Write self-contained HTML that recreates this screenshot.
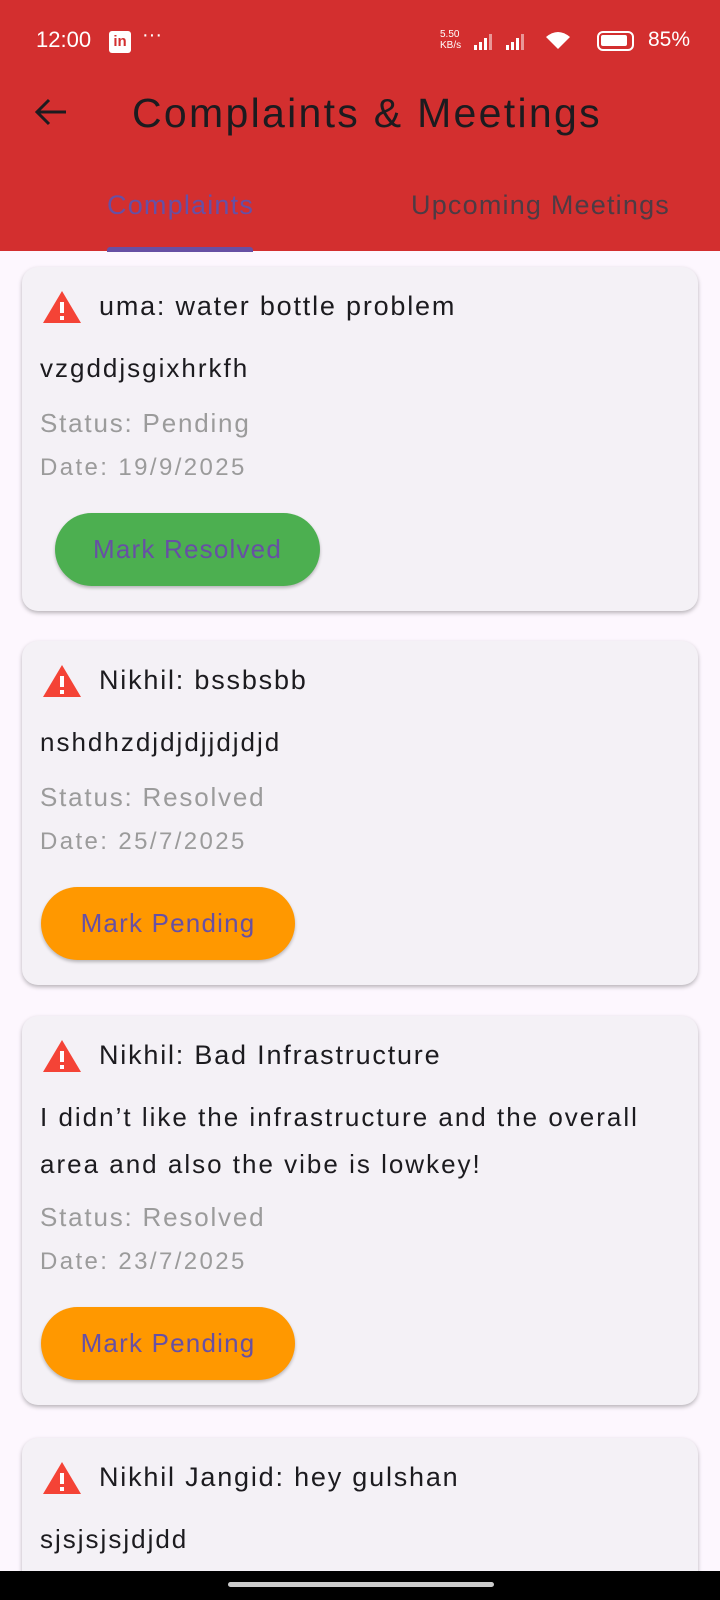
<!DOCTYPE html>
<html style="width:720px;height:1600px;overflow:hidden"><head><meta charset="utf-8"><style>
*{margin:0;padding:0;box-sizing:border-box}
body{width:720px;height:1600px;overflow:hidden;background:#FDF7FE;font-family:"Comic Sans MS","Liberation Sans",sans-serif;position:relative;color:#1c1b1f}
.hdr{position:absolute;left:0;top:0;width:720px;height:251px;background:#D32F2F}
.abs{position:absolute;white-space:nowrap}
.card{position:absolute;left:22px;width:676px;background:#F4F1F6;border-radius:16px;box-shadow:0 2px 4px rgba(0,0,0,.28);overflow:hidden}
.card .ic{position:absolute;left:20px;top:22px}
.card .t{position:absolute;left:77px;top:24px;font-size:27px;letter-spacing:1.8px}
.card .d{position:absolute;left:18px;font-size:26px;line-height:47px;letter-spacing:2px}
.card .s{position:absolute;left:18px;font-size:26px;color:#9b9b9b;letter-spacing:1.8px}
.card .dt{position:absolute;left:18px;font-size:24px;color:#9b9b9b;letter-spacing:2.4px}
.btn{position:absolute;height:73px;border-radius:37px;font-size:26px;letter-spacing:1.2px;color:#6750A4;display:flex;align-items:center;justify-content:center;box-shadow:0 2px 3px rgba(0,0,0,.25)}
</style></head><body>
<div class="hdr"></div>
<div class="abs" style="left:36px;top:27px;font-size:22px;color:#fff">12:00</div>
<div class="abs" style="left:109px;top:31px;width:22px;height:22px;background:#fff;border-radius:3px;color:#D32F2F;font-size:15px;font-weight:bold;text-align:center;line-height:22px">in</div>
<div class="abs" style="left:142px;top:24px;font-size:20px;color:#fff">···</div>
<div class="abs" style="left:440px;top:29px;font-size:10px;line-height:11px;color:#fff">5.50<br>KB/s</div>
<svg class="abs" style="left:472px;top:29px" width="120" height="24" viewBox="0 0 120 24" fill="#fff"><rect x="2" y="16" width="3" height="5"/><rect x="7" y="13" width="3" height="8"/><rect x="12" y="9" width="3" height="12"/><rect x="17" y="5" width="3" height="16" opacity=".5"/><rect x="34" y="16" width="3" height="5"/><rect x="39" y="13" width="3" height="8"/><rect x="44" y="9" width="3" height="12"/><rect x="49" y="5" width="3" height="16" opacity=".5"/><path d="M86 20 L74 8 Q86 -2 98 8 Z"/></svg>
<div class="abs" style="left:597px;top:31px;width:37px;height:20px;border:2.5px solid #fff;border-radius:6px"><div style="margin:2px;width:26px;height:11px;background:#fff;border-radius:2px"></div></div>
<div class="abs" style="left:648px;top:28px;font-size:21px;color:#fff">85%</div>
<svg class="abs" style="left:34px;top:97px" width="34" height="30" viewBox="0 0 34 30" fill="none" stroke="#1c1b1f" stroke-width="3"><path d="M32 15H3M15 3L3 15l12 12"/></svg>
<div class="abs" style="left:132px;top:90px;font-size:41px;letter-spacing:2.3px;color:#1c1b1f">Complaints &amp; Meetings</div>
<div class="abs" style="left:107px;top:190px;font-size:27px;letter-spacing:1.2px;color:#6750A4">Complaints</div>
<div class="abs" style="left:107px;top:247px;width:146px;height:5px;background:#6750A4;border-radius:3px 3px 0 0"></div>
<div class="abs" style="left:411px;top:190px;font-size:27px;letter-spacing:1.2px;color:#4d3b44">Upcoming Meetings</div>

<div class="card" style="top:267px;height:344px">
<svg class="ic" width="40" height="36" viewBox="0 0 40 36"><path d="M20 2L39 34H1Z" fill="#F44336"/><rect x="18" y="13" width="4" height="11" fill="#fff"/><rect x="18" y="27" width="4" height="4" fill="#fff"/></svg>
<div class="t">uma: water bottle problem</div>
<div class="d" style="top:78px">vzgddjsgixhrkfh</div>
<div class="s" style="top:141px">Status: Pending</div>
<div class="dt" style="top:187px">Date: 19/9/2025</div>
<div class="btn" style="left:33px;top:246px;width:265px;background:#4CAF50">Mark Resolved</div>
</div>

<div class="card" style="top:641px;height:344px">
<svg class="ic" width="40" height="36" viewBox="0 0 40 36"><path d="M20 2L39 34H1Z" fill="#F44336"/><rect x="18" y="13" width="4" height="11" fill="#fff"/><rect x="18" y="27" width="4" height="4" fill="#fff"/></svg>
<div class="t">Nikhil: bssbsbb</div>
<div class="d" style="top:78px">nshdhzdjdjdjjdjdjd</div>
<div class="s" style="top:141px">Status: Resolved</div>
<div class="dt" style="top:187px">Date: 25/7/2025</div>
<div class="btn" style="left:19px;top:246px;width:254px;background:#FF9800">Mark Pending</div>
</div>

<div class="card" style="top:1016px;height:389px">
<svg class="ic" width="40" height="36" viewBox="0 0 40 36"><path d="M20 2L39 34H1Z" fill="#F44336"/><rect x="18" y="13" width="4" height="11" fill="#fff"/><rect x="18" y="27" width="4" height="4" fill="#fff"/></svg>
<div class="t">Nikhil: Bad Infrastructure</div>
<div class="d" style="top:78px">I didn’t like the infrastructure and the overall<br>area and also the vibe is lowkey!</div>
<div class="s" style="top:186px">Status: Resolved</div>
<div class="dt" style="top:232px">Date: 23/7/2025</div>
<div class="btn" style="left:19px;top:291px;width:254px;background:#FF9800">Mark Pending</div>
</div>

<div class="card" style="top:1438px;height:162px;border-radius:16px 16px 0 0">
<svg class="ic" width="40" height="36" viewBox="0 0 40 36"><path d="M20 2L39 34H1Z" fill="#F44336"/><rect x="18" y="13" width="4" height="11" fill="#fff"/><rect x="18" y="27" width="4" height="4" fill="#fff"/></svg>
<div class="t">Nikhil Jangid: hey gulshan</div>
<div class="d" style="top:78px">sjsjsjsjdjdd</div>
</div>

<div class="abs" style="left:0;top:1571px;width:720px;height:29px;background:#000"></div>
<div class="abs" style="left:228px;top:1582px;width:266px;height:5px;background:#ccc;border-radius:3px"></div>
</body></html>
